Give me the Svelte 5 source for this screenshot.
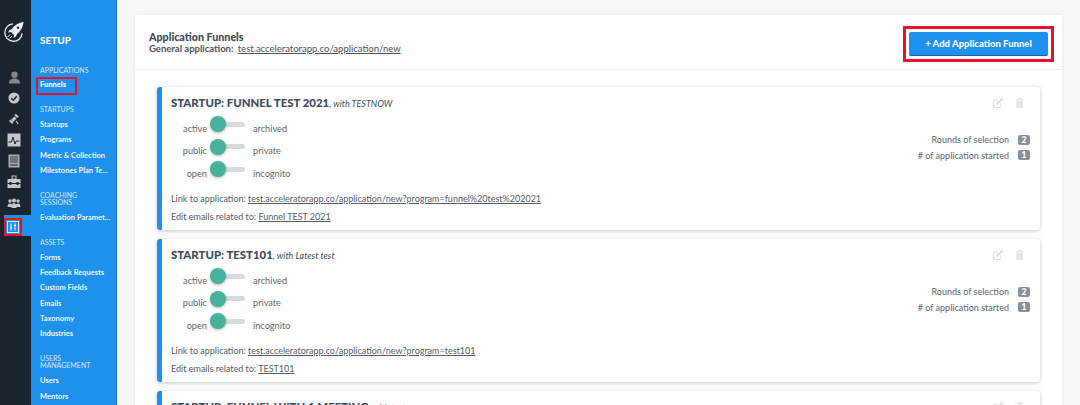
<script lang="ts">
  const groups = [
    { title: ["APPLICATIONS"], items: ["Funnels"] },
    { title: ["STARTUPS"], items: ["Startups", "Programs", "Metric & Collection", "Milestones Plan Te..."] },
    { title: ["COACHING", "SESSIONS"], items: ["Evaluation Paramet..."] },
    { title: ["ASSETS"], items: ["Forms", "Feedback Requests", "Custom Fields", "Emails", "Taxonomy", "Industries"] },
    { title: ["USERS", "MANAGEMENT"], items: ["Users", "Mentors"] }
  ];

  const funnels = [
    { name: "STARTUP: FUNNEL TEST 2021", partner: "with TESTNOW", link: "test.acceleratorapp.co/application/new?program=funnel%20test%202021", emails: "Funnel TEST 2021" },
    { name: "STARTUP: TEST101", partner: "with Latest test", link: "test.acceleratorapp.co/application/new?program=test101", emails: "TEST101" },
    { name: "STARTUP: FUNNEL WITH 1 MEETING", partner: "with test", link: "", emails: "" }
  ];

  const toggles = [
    ["active", "archived"],
    ["public", "private"],
    ["open", "incognito"]
  ];
</script>

<div class="page">
  <nav class="rail">
    <svg class="logo" viewBox="0 0 22 22" width="22" height="22">
      <path d="M10 2.900A8.700 8.700 0 1 0 19.200 12.500" fill="none" stroke="#eef1f3" stroke-width="1.300" />
      <path d="M20.500 1C16 1.500 11.500 4 9 8L6.500 9 5 11.500 8 11l3 3-.5 3 2.500-1.500 1-2.500c3.500-2.500 6-7 6.500-12z" fill="#eef1f3" />
      <circle cx="15" cy="6.800" r="1.200" fill="#1c2430" />
      <path d="M7 13.500l-2.500 2.500M8.800 15.200l-2 2.300" stroke="#eef1f3" stroke-width="1" />
    </svg>
    <div class="rail-icons">
      <span class="rail-icon">
        <svg viewBox="0 0 14 14" width="13" height="13"><circle cx="7" cy="4" r="3.400" fill="#85898e" /><path d="M1 13.500c0-4 2.500-5.500 6-5.500s6 1.500 6 5.500z" fill="#85898e" /></svg>
      </span>
      <span class="rail-icon">
        <svg viewBox="0 0 14 14" width="12" height="12"><circle cx="7" cy="7" r="6.500" fill="#c4c7ca" /><path d="M3.800 7.200l2.400 2.400L10.200 5" fill="none" stroke="#1c2430" stroke-width="1.800" /></svg>
      </span>
      <span class="rail-icon">
        <svg viewBox="0 0 14 14" width="12" height="12"><path d="M3.500 8l4-4 2.500 2.500-4 4z" fill="#c4c7ca" /><path d="M9 1l3.500 3-1.800 1.800-3.300-3.200zM2.800 7.600L6.400 11 4.800 12.800 1.200 9.300z" fill="#c4c7ca" /><path d="M9.500 9.500l2.500 3.500" stroke="#c4c7ca" stroke-width="1.200" /></svg>
      </span>
      <span class="rail-icon">
        <svg viewBox="0 0 14 14" width="14" height="14"><rect x=".5" y=".5" width="13" height="13" fill="#c4c7ca" /><path d="M1.500 9h3l1.500-5 2 7 1.200-3h3.300" fill="none" stroke="#1c2430" stroke-width="1" /></svg>
      </span>
      <span class="rail-icon">
        <svg viewBox="0 0 14 14" width="14" height="14"><rect x="1.500" y=".5" width="11" height="13" fill="#a9adb1" /><rect x="3" y="2" width="8" height="7" fill="#6e7379" /><path d="M3 11h8" stroke="#1c2430" stroke-width="1" /></svg>
      </span>
      <span class="rail-icon">
        <svg viewBox="0 0 14 14" width="14" height="14"><rect x=".5" y="4" width="13" height="9" fill="#c4c7ca" /><rect x="5" y="1" width="4" height="3" fill="none" stroke="#c4c7ca" /><path d="M.5 8.500h13" stroke="#1c2430" stroke-width="1" /><rect x="2.500" y="7" width="2" height="3" fill="#1c2430" /><rect x="9.500" y="7" width="2" height="3" fill="#1c2430" /></svg>
      </span>
      <span class="rail-icon">
        <svg viewBox="0 0 14 14" width="14" height="14"><circle cx="3" cy="5" r="1.700" fill="#c4c7ca" /><circle cx="11" cy="5" r="1.700" fill="#c4c7ca" /><circle cx="7" cy="4.500" r="2" fill="#c4c7ca" /><path d="M.5 11c0-2.500 1-3.500 2.500-3.500S5.500 8.500 5.500 11zM8.500 11c0-2.500 1-3.500 2.500-3.500s2.500 1 2.500 3.500z" fill="#c4c7ca" /><path d="M4.500 12c0-3.500 1-5 2.500-5s2.500 1.500 2.500 5z" fill="#c4c7ca" /></svg>
      </span>
      <span class="rail-icon active">
        <span class="marker">
          <svg viewBox="0 0 12 12" width="12" height="12"><rect x=".5" y=".5" width="11" height="11" fill="none" stroke="#d8ecfc" /><path d="M4 2.500v7M8 2.500v7" stroke="#fff" /><path d="M3 7h2M7 4.500h2" stroke="#fff" /></svg>
        </span>
      </span>
    </div>
  </nav>

  <aside class="side">
    <h2>SETUP</h2>
    {#each groups as group}
      <div class="group">
        <h3>{#each group.title as line}<span>{line}</span>{/each}</h3>
        {#each group.items as item}
          <a class="side-link" class:current={item === "Funnels"}>{item}</a>
        {/each}
      </div>
    {/each}
  </aside>

  <main class="main">
    <section class="panel">
      <header class="panel-head">
        <div>
          <h1>Application Funnels</h1>
          <p>General application: <u>test.acceleratorapp.co/application/new</u></p>
        </div>
        <span class="add-wrap"><button class="add">+ Add Application Funnel</button></span>
      </header>

      <div class="cards">
        {#each funnels as funnel}
          <article class="card">
            <div class="card-top">
              <h4>{funnel.name}<em>, {funnel.partner}</em></h4>
              <div class="card-actions">
                <svg viewBox="0 0 12 12" width="12" height="12"><path d="M9 6.500V10.500H1.500V3H6" fill="none" stroke="#dcdfe2" stroke-width="1" /><path d="M4.500 6l5.500-5.500 1.500 1.500L6 7.500l-2 .5z" fill="#dcdfe2" /></svg>
                <svg viewBox="0 0 12 12" width="11" height="12"><path d="M1.500 2.500h9M4.500 2.500V1h3v1.500" fill="none" stroke="#dcdfe2" /><path d="M2.500 3.500h7v8h-7z" fill="#e3e5e8" /></svg>
              </div>
            </div>
            <div class="card-body">
              <div class="toggles">
                {#each toggles as [on, off]}
                  <div class="toggle-row">
                    <span class="on">{on}</span>
                    <span class="switch"><span class="knob"></span></span>
                    <span class="off">{off}</span>
                  </div>
                {/each}
              </div>
              <dl class="stats">
                <div><dt>Rounds of selection</dt><dd>2</dd></div>
                <div><dt># of application started</dt><dd>1</dd></div>
              </dl>
            </div>
            <div class="links">
              <p>Link to application: <u>{funnel.link}</u></p>
              <p>Edit emails related to: <u>{funnel.emails}</u></p>
            </div>
          </article>
        {/each}
      </div>
    </section>
  </main>
</div>

<style>
  :global(body) {
    margin: 0;
    overflow: hidden;
  }

  .page {
    display: flex;
    width: 1080px;
    height: 405px;
    overflow: hidden;
    font-family: Lato, "Open Sans", sans-serif;
    color: #4a5261;
    background: #f7f8fa;
  }

  .rail {
    flex: 0 0 31px;
    background: #1c2430;
    display: flex;
    flex-direction: column;
  }

  .logo {
    margin: 21px 0 0 3px;
  }

  .rail-icons {
    margin-top: 23.500px;
    display: flex;
    flex-direction: column;
  }

  .rail-icon {
    height: 21px;
    padding-right: 3px;
    display: flex;
    align-items: center;
    justify-content: center;
  }

  .rail-icon.active {
    margin: 1.500px 0 0 4px;
    padding: 0;
    justify-content: flex-start;
    align-items: flex-end;
    background: #1e90ee;
  }

  .marker {
    width: 18px;
    height: 18px;
    display: flex;
    align-items: center;
    justify-content: center;
    border: 2px solid #e8112d;
    box-sizing: border-box;
  }

  .side {
    flex: 0 0 86px;
    background: #1e90ee;
    border-right: 1px solid #1878c8;
    box-sizing: border-box;
    padding: 33px 0 0 9px;
    color: #fff;
    overflow: hidden;
  }

  h2 {
    margin: 0 0 19.500px;
    font-size: 10px;
    line-height: 14px;
    font-weight: 900;
  }

  .group {
    margin-bottom: 13.800px;
  }

  h3 {
    margin: 0 0 3.800px;
    font-size: 7px;
    line-height: 7px;
    font-weight: 400;
    color: #d3e9fb;
  }

  h3 span {
    display: block;
  }

  .side-link {
    display: block;
    position: relative;
    font-size: 7.500px;
    line-height: 15.300px;
    font-weight: 700;
    white-space: nowrap;
    color: #eef7fe;
  }

  .side-link.current {
    color: #fff;
    font-weight: 900;
  }

  .side-link.current::after {
    content: "";
    position: absolute;
    left: -4px;
    top: 0;
    width: 41px;
    height: 18px;
    box-sizing: border-box;
    border: 2px solid #e8112d;
  }

  .main {
    flex: 1;
    padding: 15px 18px 0;
  }

  .panel {
    background: #fff;
    box-shadow: 0 0 3px rgba(60, 70, 90, 0.12);
    height: 420px;
  }

  .panel-head {
    height: 55px;
    box-sizing: border-box;
    border-bottom: 1px solid #eceef1;
    display: flex;
    justify-content: space-between;
    align-items: center;
    padding: 2px 8px 0 14px;
  }

  h1 {
    margin: 0;
    font-size: 10.700px;
    line-height: 12px;
    font-weight: 900;
    color: #3e495c;
  }

  .panel-head p {
    margin: 0;
    font-size: 9.500px;
    line-height: 12px;
    font-weight: 700;
    color: #4a5261;
  }

  .panel-head u {
    margin-left: 2px;
    font-weight: 400;
  }

  .add-wrap {
    border: 3px solid #e8112d;
    padding: 3px;
    margin-top: 2px;
    display: flex;
  }

  .add {
    width: 139px;
    height: 24px;
    padding: 0;
    border: 0;
    border-bottom: 1px solid #14609f;
    border-radius: 2px;
    background: #1e90ee;
    color: #fff;
    font: 900 9.500px Lato, sans-serif;
  }

  .cards {
    padding: 17px 22px;
    display: flex;
    flex-direction: column;
    gap: 9px;
  }

  .card {
    height: 143px;
    flex: none;
    box-sizing: border-box;
    border-left: 5px solid #1e90ee;
    border-radius: 3px;
    background: #fff;
    box-shadow: 0 1px 4px rgba(50, 60, 80, 0.3);
    padding: 8px 9px 0;
  }

  .card-top {
    display: flex;
    justify-content: space-between;
    align-items: center;
  }

  h4 {
    margin: 0;
    font-size: 11.400px;
    line-height: 15px;
    font-weight: 900;
    color: #3e495c;
  }

  h4 em {
    font-size: 9px;
    font-weight: 400;
  }

  .card-actions {
    display: flex;
    gap: 10px;
    padding-right: 6px;
  }

  .card-body {
    display: flex;
    justify-content: space-between;
  }

  .toggles {
    padding-top: 6px;
  }

  .toggle-row {
    height: 22.500px;
    display: flex;
    align-items: center;
    font-size: 9.200px;
    color: #5f6673;
  }

  .on {
    width: 36px;
    text-align: right;
  }

  .switch {
    position: relative;
    width: 35px;
    height: 5px;
    margin: -8px 0 0 3px;
    border-radius: 3px;
    background: #d9dade;
  }

  .knob {
    position: absolute;
    left: 0;
    top: -5.500px;
    width: 16px;
    height: 16px;
    border-radius: 50%;
    background: #47b29a;
    box-shadow: 0 1px 3px rgba(0, 0, 0, 0.3);
  }

  .off {
    margin-left: 8px;
  }

  .stats {
    margin: 21px 1px 0 0;
    font-size: 9px;
    color: #5f6673;
  }

  .stats div {
    display: flex;
    justify-content: flex-end;
    align-items: center;
    height: 15.500px;
  }

  dt {
    margin: 0;
  }

  dd {
    margin: 0 0 0 9px;
    width: 12px;
    height: 10px;
    line-height: 10px;
    border-radius: 2px;
    text-align: center;
    background: #8a8f9b;
    color: #fff;
    font-size: 8.500px;
    font-weight: 900;
  }

  .links {
    margin-top: 5px;
  }

  .links p {
    margin: 0;
    font-size: 9px;
    line-height: 18px;
    color: #555c69;
  }
</style>
